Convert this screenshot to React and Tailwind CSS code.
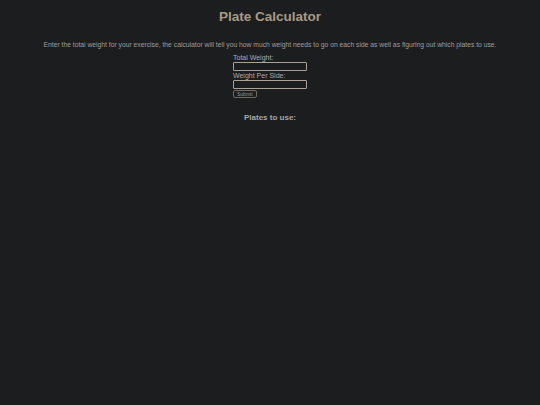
export default function App() {
  return (
    <div className="min-h-[405px] bg-[#1c1d1f] font-['Liberation_Sans',Arial,sans-serif] text-[#a7a7a7] flex flex-col items-center">
      <h1 className="mt-[9px] text-[13.5px] leading-[16px] font-bold text-[#a89a84]">Plate Calculator</h1>
      <p className="mt-[16px] text-[6.75px] leading-[8px] text-[#9e9e9e]">
        Enter the total weight for your exercise, the calculator will tell you how much weight needs to go on each side as well as figuring out which plates to use.
      </p>
      <form className="mt-[5px] flex flex-col items-start text-[7px] leading-[8px] text-[#ababab]" onSubmit={(e) => e.preventDefault()}>
        <label>Total Weight:</label>
        <input className="w-[74px] h-[9px] border border-[#aaa294] rounded-[1px] bg-transparent" />
        <label className="mt-[1px]">Weight Per Side:</label>
        <input className="w-[74px] h-[9px] border border-[#aaa294] rounded-[1px] bg-transparent" />
        <button className="mt-[1px] px-[3px] h-[8px] text-[5px] leading-none border border-[#6f6a62] rounded-[2px] text-[#9a9a9a]">Submit</button>
      </form>
      <h2 className="mt-[15px] text-[8px] leading-[10px] font-bold text-[#a5a5a5]">Plates to use:</h2>
    </div>
  );
}
